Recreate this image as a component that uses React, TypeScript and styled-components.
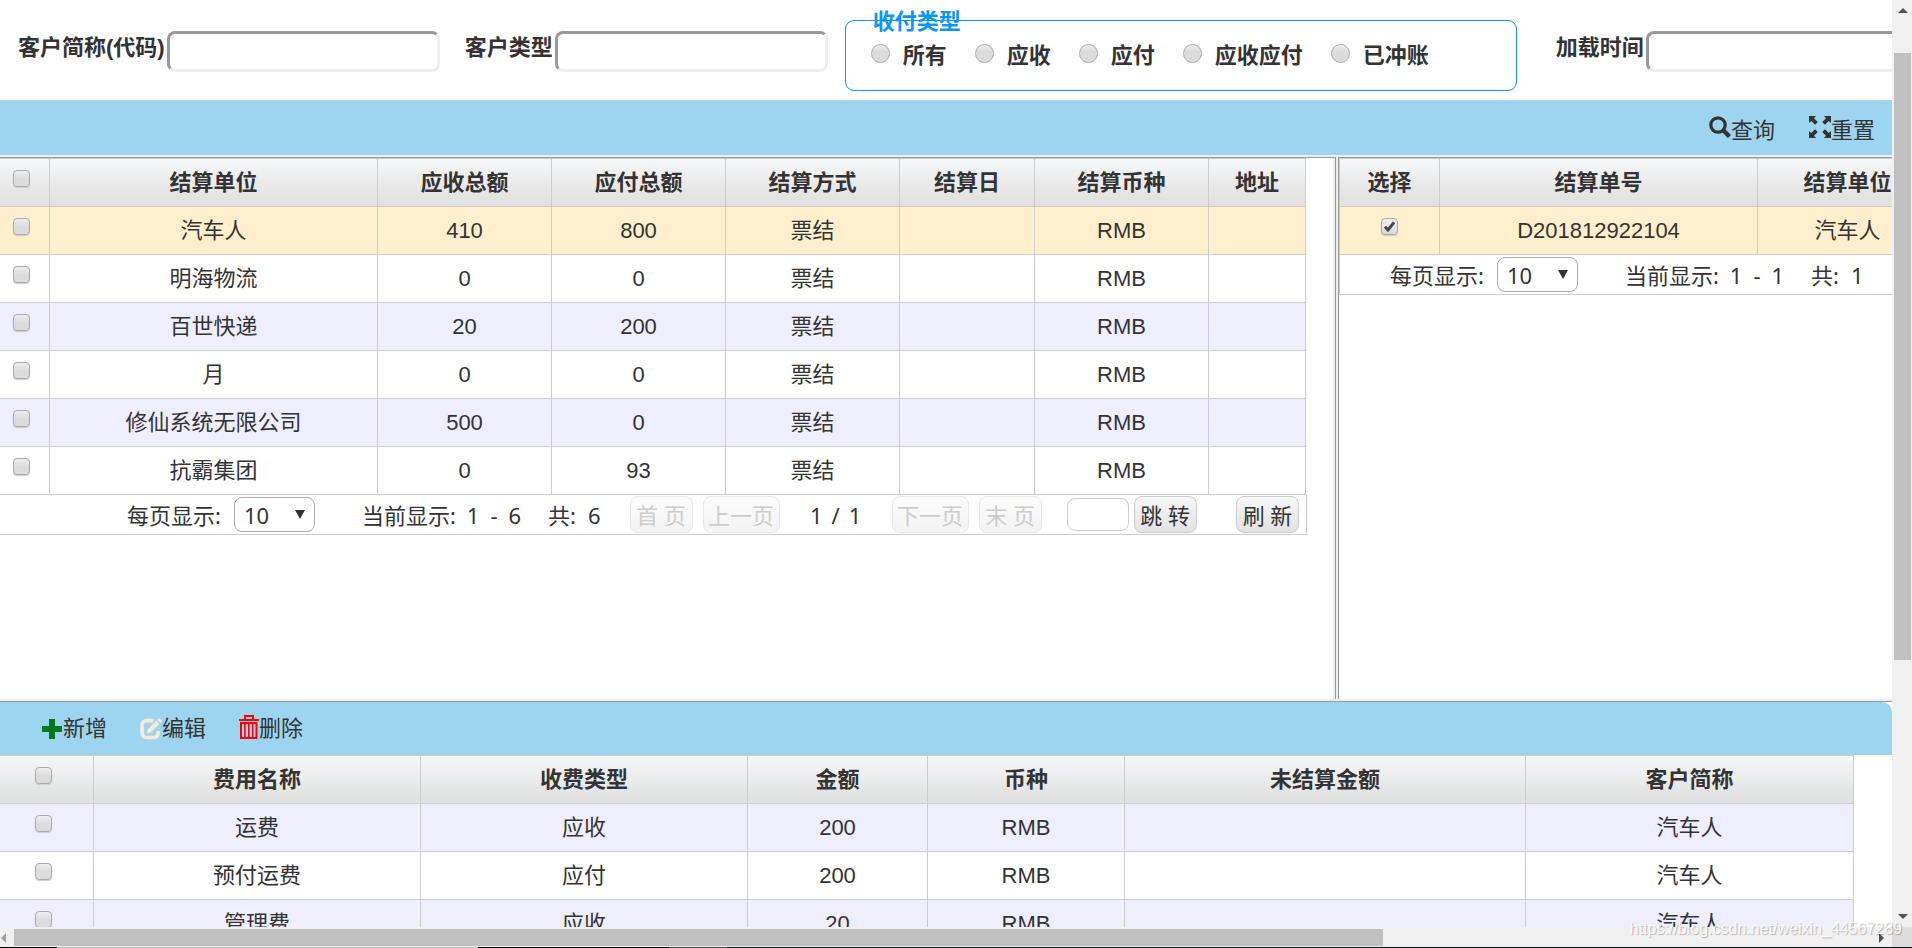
import React from "react";
import styled, { createGlobalStyle, css } from "styled-components";

const GlobalStyle = createGlobalStyle`
  * { box-sizing: border-box; }
  body {
    margin: 0;
    overflow: hidden;
    background: #fff;
    color: #333;
    font-family: "Liberation Sans", "Noto Sans CJK SC", sans-serif;
    font-size: 22px;
    line-height: 26px;
  }
  button, input, select { font: inherit; color: inherit; margin: 0; }
`;

const Screen = styled.div`
  display: grid;
  grid-template-columns: minmax(0, 1fr) 20px;
  grid-template-rows: minmax(0, 1fr) 20px 1px;
  height: 100vh;
  position: relative;
`;

const Page = styled.main`
  overflow: hidden;
  display: flex;
  flex-direction: column;
  & > * { flex: none; }
`;

/* ---------- filters ---------- */

const Filters = styled.form`
  display: flex;
  align-items: flex-start;
  height: 100px;
  padding: 20px 0 0 18px;
  font-weight: bold;
`;

const Field = styled.div<{ $after: number }>`
  flex: none;
  display: flex;
  gap: 2px;
  padding-top: 11px;
  margin-right: ${(p) => p.$after}px;
  label { line-height: 34px; white-space: nowrap; }
`;

const TextBox = styled.input`
  width: 273px;
  height: 41px;
  padding: 0 8px;
  background: #fff;
  border: 3px solid;
  border-color: #999 #eee #eee #999;
  border-radius: 8px;
  outline: none;
`;

const TypeGroup = styled.fieldset`
  position: relative;
  flex: none;
  display: flex;
  gap: 28px;
  width: 672px;
  height: 71px;
  margin: 0 39px 0 0;
  padding: 22px 0 0 25px;
  border: 1px solid #0a95ff;
  border-radius: 9px;
`;

const TypeLegend = styled.legend`
  position: absolute;
  top: -12px;
  left: 27px;
  padding: 0;
  color: #0a95ff;
`;

const RadioLabel = styled.label`
  display: flex;
  gap: 13px;
  height: 26px;
  white-space: nowrap;
`;

const Radio = styled.input`
  appearance: none;
  flex: none;
  width: 19px;
  height: 19px;
  margin-top: 1px;
  border: 1px solid #aaa;
  border-radius: 50%;
  background: linear-gradient(#eee, #dcdcdc 40%, #dcdcdc);
`;

/* ---------- toolbars ---------- */

const Toolbar = styled.div<{ $end?: boolean }>`
  display: flex;
  align-items: center;
  background: #9dd5f0;
  ${(p) =>
    p.$end
      ? css`
          justify-content: flex-end;
          gap: 34px;
          height: 55px;
          padding: 6px 17px 0 0;
          svg { margin-bottom: 8px; }
        `
      : css`
          gap: 33px;
          height: 53px;
          padding-left: 41px;
          border-top-right-radius: 10px;
        `}
`;

const Action = styled.button`
  display: flex;
  align-items: center;
  padding: 0;
  border: 0;
  background: none;
  svg { flex: none; display: block; }
`;

/* ---------- split panels ---------- */

const Split = styled.div`
  display: grid;
  grid-template-columns: minmax(0, 1336fr) minmax(0, 554fr);
  column-gap: 2px;
  min-height: 547px;
  border-top: 2px solid #eee;
  border-bottom: 1px solid #999;
  background: #eee;
`;

const Panel = styled.section<{ $right?: boolean }>`
  overflow: hidden;
  margin-bottom: 2px;
  border-top: 1px solid #999;
  background: #fff;
  ${(p) =>
    p.$right
      ? "border-left: 1px solid #999;"
      : "border-right: 1px solid #999; box-shadow: inset -2px 0 #eee;"}
`;

/* ---------- tables ---------- */

const DataTable = styled.table<{ $width: string; $edge?: boolean }>`
  width: ${(p) => p.$width};
  table-layout: fixed;
  border-collapse: separate;
  border-spacing: 0;
  text-align: center;
  ${(p) => p.$edge && "border-left: 1px solid #ccc;"}
  th, td {
    padding: 0;
    border: 0 solid #ccc;
    border-right-width: 1px;
    border-bottom-width: 1px;
    white-space: nowrap;
  }
  th {
    height: 49px;
    border-top-width: 1px;
    background: linear-gradient(#f6f7f8, #e2e2e2 85%);
  }
  td { height: 48px; }
`;

const Row = styled.tr<{ $tone: "plain" | "stripe" | "active" }>`
  background: ${(p) => ({ plain: "#fff", stripe: "#eeeeff", active: "#ffefcc" })[p.$tone]};
`;

const Tick = styled.input<{ $centered?: boolean }>`
  appearance: none;
  display: block;
  width: 17px;
  height: 17px;
  margin: 0 auto 8px;
  ${(p) => !p.$centered && "translate: -3px;"}
  border: 1px solid #aaa;
  border-radius: 4px;
  background: linear-gradient(#eee, #dcdcdc 50%, #dcdcdc);
  box-shadow: 0 1px 1px #ccc;
  &:checked {
    background:
      url("data:image/svg+xml,%3Csvg xmlns='http://www.w3.org/2000/svg' viewBox='0 0 15 15'%3E%3Cpath d='M3 7.8l3 3.2 6-7.6' fill='none' stroke='%23444' stroke-width='3'/%3E%3C/svg%3E") center / 15px 15px no-repeat,
      linear-gradient(#eee, #dcdcdc);
  }
`;

/* ---------- pager ---------- */

const PagerBar = styled.div<{ $right?: boolean }>`
  display: flex;
  align-items: center;
  height: 40px;
  white-space: nowrap;
  border-bottom: 1px solid #ccc;
  font-family: "Noto Sans", "Noto Sans CJK SC", sans-serif;
  line-height: 24px;
  ${(p) =>
    p.$right
      ? "padding-left: 50px; border-left: 1px solid #ccc;"
      : "width: calc(100% - 28px); padding: 0 7px 0 127px; border-right: 1px solid #ccc;"}
  & > * { flex: none; }
`;

const PageSize = styled.label`
  position: relative;
  display: flex;
  align-items: center;
  gap: 13px;
  margin-right: 47px;
  svg { position: absolute; right: 10px; top: 13px; pointer-events: none; }
`;

const Select = styled.select`
  appearance: none;
  width: 81px;
  height: 35px;
  padding: 0 0 0 9px;
  border: 1px solid #aaa;
  border-radius: 8px;
  background: #fff;
`;

const Counts = styled.span`
  display: flex;
  gap: 11px;
`;

const Total = styled(Counts)`
  gap: 12px;
  margin-left: 27px;
`;

const PagerButton = styled.button<{ $wide?: boolean }>`
  width: ${(p) => (p.$wide ? 77 : 63)}px;
  height: 37px;
  padding: 0;
  border: 1px solid #ccc;
  border-radius: 8px;
  background: linear-gradient(#f6f7f8, #e2e2e2);
  &:disabled { color: #ccc; border-color: #e8e8e8; background: linear-gradient(#fcfcfc, #f3f3f3); }
`;

const ButtonPair = styled.div<{ $before: number; $gap: number }>`
  display: flex;
  align-items: center;
  gap: ${(p) => p.$gap}px;
  margin-left: ${(p) => p.$before}px;
`;

const PageNumber = styled.span`
  display: flex;
  justify-content: center;
  gap: 9px;
  width: 112px;
`;

const JumpBox = styled.input`
  width: 62px;
  height: 33px;
  border: 1px solid #ccc;
  border-radius: 8px;
  outline: none;
`;

const Refresh = styled(PagerButton)`
  margin-left: auto;
`;

/* ---------- scroll bars ---------- */

const VTrack = styled.div`
  display: grid;
  grid-template-rows: 53px 607fr 267fr;
  justify-items: center;
  padding: 0 1px 0 2px;
  background: #f0f0f0;
  svg:first-child { margin-top: 8px; }
  svg:last-child { align-self: end; margin-bottom: 8px; }
`;

const HTrack = styled.div`
  display: grid;
  grid-template-columns: 14px 1369fr 509fr;
  align-items: center;
  padding: 2px 0 1px;
  background: #f0f0f0;
  svg:last-child { justify-self: end; margin-right: 8px; }
`;

const Thumb = styled.div`
  align-self: stretch;
  justify-self: stretch;
  background: #c0c0c0;
`;

const Corner = styled.div`
  background: #dcdcdc;
`;

const Edge = styled.div`
  grid-column: 1 / -1;
  background: linear-gradient(90deg, #000 3%, #bbb 3%, #bbb 25%, #000 25%, #000 35%, #444 35%, #444 38%, #0a0f18 38%);
`;

const Watermark = styled.div`
  position: absolute;
  right: 10px;
  bottom: 6px;
  font-size: 16px;
  color: rgba(255, 255, 255, 0.85);
  text-shadow: 1px 1px 1px rgba(0, 0, 0, 0.25);
  pointer-events: none;
`;

/* ---------- icons ---------- */

const SearchIcon = () => (
  <svg width="22" height="22" viewBox="0 0 22 22" fill="none" stroke="#333">
    <circle cx="9" cy="9" r="7.2" strokeWidth="3.2" />
    <path d="M14 14l6.5 6.5" strokeWidth="4.4" />
  </svg>
);

const FullscreenIcon = () => (
  <svg width="22" height="22" viewBox="0 0 22 22" fill="#333">
    <path d="M0 0h7L5 2.200 8.800 6 6 8.800 2.200 5 0 7z" />
    <path d="M22 0h-7l2 2.200L13.200 6 16 8.800 19.800 5 22 7z" />
    <path d="M0 22h7l-2-2.200L8.800 16 6 13.200 2.200 17 0 15z" />
    <path d="M22 22h-7l2-2.200L13.200 16 16 13.200 19.800 17 22 15z" />
  </svg>
);

const PlusIcon = () => (
  <svg width="22" height="22" viewBox="0 0 22 22" fill="#007a1c">
    <path d="M8 1h6v7h7v6h-7v7H8v-7H1V8h7z" />
  </svg>
);

const EditIcon = () => (
  <svg width="22" height="22" viewBox="0 0 22 22">
    <path d="M13.500 2.600H6.500A4.500 4.500 0 0 0 2.100 7V15.200A4.500 4.500 0 0 0 6.500 19.500H14A4.500 4.500 0 0 0 18.300 15.200V13" fill="none" stroke="#faebd7" strokeWidth="3.600" />
    <path d="M16.300 2.700l3.200 3.200-8.400 8.400-4 .9.900-4z" fill="#faebd7" />
    <path d="M17.200 1.800l1.300-1.300q.5-.5 1 0l2.100 2.100q.5.500 0 1l-1.300 1.300z" fill="#faebd7" />
  </svg>
);

const TrashIcon = () => (
  <svg width="20" height="28" viewBox="0 0 20 28" fill="none" stroke="#f00">
    <path d="M0 5h20" strokeWidth="2" />
    <path d="M6 4.500V1h8v3.500" strokeWidth="2" />
    <path d="M2 8V23H17.500V8z" strokeWidth="2" />
    <path d="M5.900 8v14M9.800 8v14M13.700 8v14" strokeWidth="1.600" />
  </svg>
);

const Arrow = ({ d, w, h, fill = "#505050" }: { d: string; w: number; h: number; fill?: string }) => (
  <svg width={w} height={h} viewBox={`0 0 ${w} ${h}`} fill={fill}>
    <path d={d} />
  </svg>
);

/* ---------- data ---------- */

const accounts = [
  ["汽车人", "410", "800"],
  ["明海物流", "0", "0"],
  ["百世快递", "20", "200"],
  ["月", "0", "0"],
  ["修仙系统无限公司", "500", "0"],
  ["抗霸集团", "0", "93"],
];

const fees = [
  ["运费", "应收", "200"],
  ["预付运费", "应付", "200"],
  ["管理费", "应收", "20"],
];

const payTypes = ["所有", "应收", "应付", "应收应付", "已冲账"];

const Columns = ({ widths }: { widths: (number | null)[] }) => (
  <colgroup>
    {widths.map((w, i) => (
      <col key={i} width={w ?? undefined} />
    ))}
  </colgroup>
);

const PagerInfo = ({ count }: { count: string }) => (
  <>
    <PageSize>
      每页显示:
      <Select defaultValue="10">
        <option>10</option>
        <option>20</option>
      </Select>
      <Arrow d="M0 0h10L5 9z" w={10} h={9} fill="#333" />
    </PageSize>
    <Counts>
      <span>当前显示:</span>
      <span>1</span>
      <span>-</span>
      <span>{count}</span>
    </Counts>
    <Total>
      <span>共:</span>
      <span>{count}</span>
    </Total>
  </>
);

export default function App() {
  return (
    <Screen>
      <GlobalStyle />
      <Page>
        <Filters>
          <Field $after={25}>
            <label htmlFor="code">客户简称(代码)</label>
            <TextBox id="code" />
          </Field>
          <Field $after={17}>
            <label htmlFor="kind">客户类型</label>
            <TextBox id="kind" />
          </Field>
          <TypeGroup>
            <TypeLegend>收付类型</TypeLegend>
            {payTypes.map((t) => (
              <RadioLabel key={t}>
                <Radio type="radio" name="payType" />
                {t}
              </RadioLabel>
            ))}
          </TypeGroup>
          <Field $after={0}>
            <label htmlFor="loaded">加载时间</label>
            <TextBox id="loaded" />
          </Field>
        </Filters>

        <Toolbar $end>
          <Action type="button"><SearchIcon />查询</Action>
          <Action type="button"><FullscreenIcon />重置</Action>
        </Toolbar>

        <Split>
          <Panel>
            <DataTable $width="calc(100% - 29px)">
              <Columns widths={[50, null, 174, 174, 174, 135, 174, 97]} />
              <thead>
                <tr>
                  <th><Tick type="checkbox" aria-label="全选" /></th>
                  {["结算单位", "应收总额", "应付总额", "结算方式", "结算日", "结算币种", "地址"].map((h) => (
                    <th key={h}>{h}</th>
                  ))}
                </tr>
              </thead>
              <tbody>
                {accounts.map(([name, receivable, payable], i) => (
                  <Row key={name} $tone={i === 0 ? "active" : i % 2 ? "plain" : "stripe"}>
                    <td><Tick type="checkbox" aria-label={name} /></td>
                    <td>{name}</td>
                    <td>{receivable}</td>
                    <td>{payable}</td>
                    <td>票结</td>
                    <td />
                    <td>RMB</td>
                    <td />
                  </Row>
                ))}
              </tbody>
            </DataTable>
            <PagerBar>
              <PagerInfo count="6" />
              <ButtonPair $before={29} $gap={10}>
                <PagerButton type="button" disabled>首 页</PagerButton>
                <PagerButton type="button" $wide disabled>上一页</PagerButton>
              </ButtonPair>
              <PageNumber>
                <span>1</span>
                <span>/</span>
                <span>1</span>
              </PageNumber>
              <ButtonPair $before={0} $gap={10}>
                <PagerButton type="button" $wide disabled>下一页</PagerButton>
                <PagerButton type="button" disabled>末 页</PagerButton>
              </ButtonPair>
              <ButtonPair $before={25} $gap={5}>
                <JumpBox aria-label="页码" />
                <PagerButton type="button">跳 转</PagerButton>
              </ButtonPair>
              <Refresh type="button">刷 新</Refresh>
            </PagerBar>
          </Panel>
          <Panel $right>
            <DataTable $width="719px" $edge>
              <Columns widths={[100, 318, 180, 120]} />
              <thead>
                <tr>
                  <th>选择</th>
                  <th>结算单号</th>
                  <th>结算单位</th>
                  <th />
                </tr>
              </thead>
              <tbody>
                <Row $tone="active">
                  <td><Tick $centered type="checkbox" defaultChecked aria-label="D201812922104" /></td>
                  <td>D201812922104</td>
                  <td>汽车人</td>
                  <td />
                </Row>
              </tbody>
            </DataTable>
            <PagerBar $right>
              <PagerInfo count="1" />
            </PagerBar>
          </Panel>
        </Split>

        <Toolbar>
          <Action type="button"><PlusIcon />新增</Action>
          <Action type="button"><EditIcon />编辑</Action>
          <Action type="button"><TrashIcon />删除</Action>
        </Toolbar>
        <DataTable $width="calc(100% - 38px)">
          <Columns widths={[94, 327, 327, 180, 197, null, 328]} />
          <thead>
            <tr>
              <th><Tick type="checkbox" aria-label="全选费用" /></th>
              {["费用名称", "收费类型", "金额", "币种", "未结算金额", "客户简称"].map((h) => (
                <th key={h}>{h}</th>
              ))}
            </tr>
          </thead>
          <tbody>
            {fees.map(([name, kind, amount], i) => (
              <Row key={name} $tone={i % 2 ? "plain" : "stripe"}>
                <td><Tick type="checkbox" aria-label={name} /></td>
                <td>{name}</td>
                <td>{kind}</td>
                <td>{amount}</td>
                <td>RMB</td>
                <td />
                <td>汽车人</td>
              </Row>
            ))}
          </tbody>
        </DataTable>
      </Page>

      <VTrack>
        <Arrow d="M5 0l5 5H0z" w={10} h={5} />
        <Thumb />
        <Arrow d="M0 0h10L5 5z" w={10} h={5} />
      </VTrack>
      <HTrack>
        <Arrow d="M6 0v10L1 5z" w={6} h={10} fill="#a0a0a0" />
        <Thumb />
        <Arrow d="M0 0l5 5-5 5z" w={5} h={10} />
      </HTrack>
      <Corner />
      <Edge />
      <Watermark>https://blog.csdn.net/weixin_44567289</Watermark>
    </Screen>
  );
}
